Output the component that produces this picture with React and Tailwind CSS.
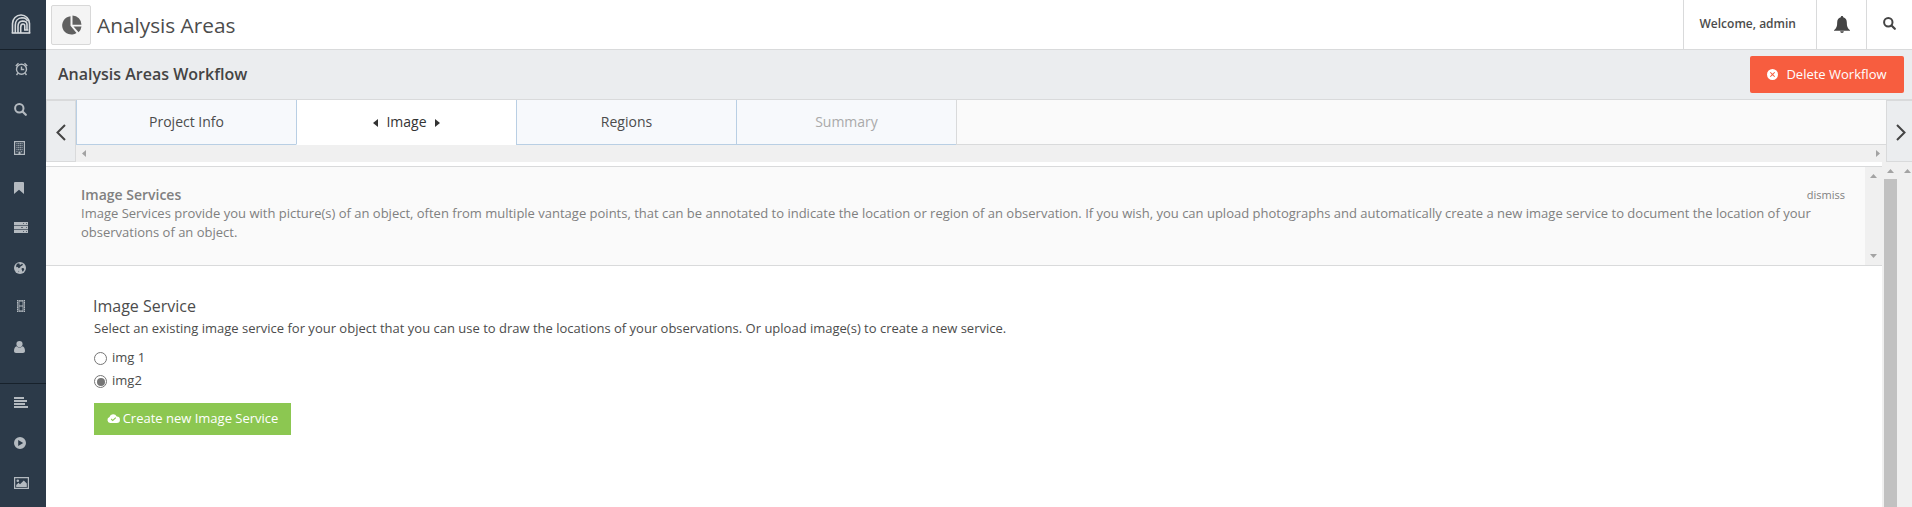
import React from "react";

function Svg({ w, h, vb, className = "", children }) {
  return (
    <svg width={w} height={h} viewBox={vb || `0 0 ${w} ${h}`} fill="currentColor" className={"shrink-0 " + className}>
      {children}
    </svg>
  );
}

const Logo = () => (
  <Svg w={20} h={20} className="text-[#d5d9dc]">
    <g fill="none" stroke="currentColor" strokeWidth="1.600">
      <path d="M1.500 19V9.500a8.500 8.500 0 0 1 17 0V19" />
      <path d="M4.300 19V11C4.300 7 7 4 11 3.800c3 0 5 1.500 5.500 3.500" />
      <path d="M7 19v-6.500c0-3.500 2-5.300 4.500-5.500 2.500 0 4.500 1 4.500 3.500V16" />
      <path d="M9.700 19v-5.500c0-2.500 1-3.500 2.300-3.500s1.800.7 1.800 2V16h3.500" />
      <path d="M.7 19h18.600" />
    </g>
  </Svg>
);

const Search = ({ size = 13, className }) => (
  <Svg w={size} h={size} vb="0 0 13 13" className={className}>
    <circle cx="5.300" cy="5.300" r="4.200" fill="none" stroke="currentColor" strokeWidth="2" />
    <path d="M8.500 8.500l3.300 3.300" stroke="currentColor" strokeWidth="2.200" strokeLinecap="round" />
  </Svg>
);

const Alarm = () => (
  <Svg w={13} h={14}>
    <g fill="none" stroke="currentColor" strokeWidth="1.400">
      <circle cx="6.500" cy="7.200" r="5" />
      <path d="M6.500 4.500v3h2.700" />
      <path d="M.8 3.900L3.500 1.200M12.200 3.900L9.500 1.200M2.800 11.300l-1.300 1.700M10.200 11.300l1.300 1.700" />
    </g>
  </Svg>
);

const Building = () => (
  <Svg w={11} h={14}>
    <path d="M.6.600h9.800v12.800H.6z" fill="none" stroke="currentColor" strokeWidth="1.200" />
    <path d="M2.300 2.700h6.400M2.300 4.700h6.400M2.300 6.700h6.400M2.300 8.700h6.400M2.300 10.700h1.700M7 10.700h1.700" stroke="currentColor" strokeWidth="1.100" strokeDasharray="1.300 .4" />
    <path d="M4.500 10.500h2v3h-2z" />
  </Svg>
);

const Bookmark = () => (
  <Svg w={10} h={12}>
    <path d="M1 0h8a1 1 0 0 1 1 1v11L5 7.700 0 12V1a1 1 0 0 1 1-1z" />
  </Svg>
);

const Server = () => (
  <Svg w={14} h={11}>
    <path d="M0 0h14v11H0z" opacity=".35" />
    <path fillRule="evenodd" d="M0 0h14v3H0zM9 1v1h1V1zM12 1v1h1V1zM0 4h14v3H0zM7 5v1h2V5zM12 5v1h1V5zM0 8h14v3H0zM9 9v1h1V9zM12 9v1h1V9z" />
  </Svg>
);

const Globe = () => (
  <Svg w={12} h={12}>
    <circle cx="6" cy="6" r="6" />
    <path fill="#2c3a49" d="M3 1.800l2.300-.6.200 1.200 1.400.3.900-1 1.200.4-.7 1.500-1.600.6-.6 1.400-1.500.7-.8-1.200-1.300.2L2 4zM8 6l1.800.2.500 1-1 2-1.100.3-.2-1.500-.6-1zM4.300 8.700l.9.500-.3 1z" />
  </Svg>
);

const Film = () => (
  <Svg w={8} h={12}>
    <g fill="none" stroke="currentColor" strokeWidth="1.200">
      <path d="M.6 0v12M7.400 0v12" strokeDasharray="1.600 .5" />
      <path d="M2 .8h4M2 6h4M2 11.200h4" />
      <path d="M2 0v12M6 0v12" strokeWidth=".8" />
    </g>
  </Svg>
);

const User = () => (
  <Svg w={11} h={12}>
    <circle cx="5.500" cy="3.100" r="3.100" />
    <path d="M2.700 5.300C1 5.700 0 7.300 0 10c0 1.300.8 2 2 2h7c1.200 0 2-.7 2-2 0-2.700-1-4.300-2.700-4.700-.8.900-1.700 1.300-2.800 1.300s-2-.4-2.800-1.300z" />
  </Svg>
);

const Lines = () => (
  <Svg w={14} h={11}>
    <path d="M0 0h10v2H0zM0 3h13v2H0zM0 6h11v2H0zM0 9h14v2H0z" />
  </Svg>
);

const Play = () => (
  <Svg w={12} h={12}>
    <path fillRule="evenodd" d="M6 0a6 6 0 1 1 0 12A6 6 0 0 1 6 0zM4.200 3v6L9.200 6z" />
  </Svg>
);

const Picture = () => (
  <Svg w={15} h={12}>
    <path d="M.6.600h13.800v10.800H.6z" fill="none" stroke="currentColor" strokeWidth="1.200" />
    <circle cx="3.800" cy="3.700" r="1.300" />
    <path d="M2.200 10V8l2.300-2.300L6 7.200l3.800-3.800 3 3V10z" />
  </Svg>
);

const NAV_TOP = [
  { Icon: Alarm, box: "h-[38px] pl-[15px]" },
  { Icon: Search, box: "h-[42px] pl-[14px]" },
  { Icon: Building, box: "h-[36px] pl-[14px]" },
  { Icon: Bookmark, box: "h-[44px] pl-[14px]" },
  { Icon: Server, box: "h-[35px] pl-[14px]" },
  { Icon: Globe, box: "h-[45px] pl-[14px]" },
  { Icon: Film, box: "h-[31px] pl-[17px]" },
  { Icon: User, box: "h-[51px] pl-[14px]" },
];

const NAV_BOTTOM = [
  { Icon: Lines, box: "h-[37px] pl-[14px]" },
  { Icon: Play, box: "h-[43px] pl-[14px]" },
  { Icon: Picture, box: "h-[38px] pl-[14px]" },
];

function NavItem({ Icon, box }) {
  return (
    <a className={"flex shrink-0 items-center " + box}>
      <Icon />
    </a>
  );
}

function Sidebar() {
  return (
    <nav className="flex w-[46px] shrink-0 flex-col bg-[#2c3a49] text-[#b4bac0]">
      <div className="flex h-[50px] shrink-0 justify-center border-b border-[#17212b] pt-[14px] pr-1">
        <Logo />
      </div>
      <div className="flex h-[334px] shrink-0 flex-col border-b border-[#17212b]">
        {NAV_TOP.map((n, i) => (
          <NavItem key={i} {...n} />
        ))}
      </div>
      <div className="flex flex-col">
        {NAV_BOTTOM.map((n, i) => (
          <NavItem key={i} {...n} />
        ))}
      </div>
    </nav>
  );
}

function Header() {
  return (
    <header className="flex h-[50px] shrink-0 border-b border-[#d9dadb] bg-white">
      <div className="mt-[5px] ml-[5px] flex h-10 w-10 items-center justify-center rounded-xs border border-[#d8d8d8] bg-[#f4f4f4] text-[#606060]">
        <Svg w={21} h={21}>
          <path d="M9.500 1.200v9.600l6 7.200A9.200 9.200 0 1 1 9.500 1.200z" />
          <path d="M11.500.5a9.300 9.300 0 0 1 9 9.200h-9zM12.500 11.500h8a9 9 0 0 1-2.900 5.700z" />
        </Svg>
      </div>
      <h1 className="ml-[6px] text-[20.8px] leading-[50px] text-[#4c4c4c]">Analysis Areas</h1>
      <div className="ml-auto flex">
        <div className="w-[133px] border-l border-[#d9dadb] pl-[15.5px] text-[12px] leading-[48px] font-semibold text-[#4c4c4c]">
          Welcome, admin
        </div>
        <div className="flex w-[50px] items-center justify-center border-l border-[#d9dadb] pb-px text-[#444]">
          <Svg w={16} h={17}>
            <path d="M8 0c.8 0 1.200.5 1.200 1.200 2.400.6 3.600 2.500 3.600 5 0 4 .7 6 3.200 8v.6H0v-.6c2.500-2 3.200-4 3.200-8 0-2.500 1.200-4.400 3.600-5C6.800.5 7.200 0 8 0zM6.200 15.300h3.600c0 1-.8 1.700-1.800 1.700s-1.800-.7-1.800-1.700z" />
          </Svg>
        </div>
        <div className="flex w-[46px] items-center border-l border-[#d9dadb] pb-[3px] pl-4 text-[#444]">
          <Search />
        </div>
      </div>
    </header>
  );
}

function Tab({ children, className = "" }) {
  return (
    <div className={"flex h-[45px] w-[220px] shrink-0 items-center justify-center border-b border-l border-[#b9cfe4] pb-[2px] text-[14px] " + className}>
      {children}
    </div>
  );
}

const Tri = ({ dir, className = "" }) => (
  <Svg w={5} h={8} className={className}>
    <path d={dir === "left" ? "M5 0v8L0 4z" : "M0 0v8l5-4z"} />
  </Svg>
);

const Arrow = ({ dir }) => (
  <Svg w={7} h={4} className="text-[#a3a3a3]">
    <path d={dir === "up" ? "M0 4h7L3.500 0z" : "M0 0h7L3.500 4z"} />
  </Svg>
);

function Tabs() {
  return (
    <div className="flex h-[62px] shrink-0">
      <div className="flex w-[30px] items-center border border-[#d9dadb] bg-[#ebedef] pt-[3px] pl-[9px] text-[#444]">
        <Svg w={10} h={17}>
          <path d="M9 1L1.500 8.500 9 16" fill="none" stroke="currentColor" strokeWidth="2" />
        </Svg>
      </div>
      <div className="flex flex-1 flex-col">
        <div className="flex h-[45px] bg-[#fafafa]">
          <Tab className="bg-[#f7f9fc] text-[#4c4c4c]">Project Info</Tab>
          <Tab className="gap-2 border-b-white bg-white font-medium text-[#333]">
            <Tri dir="left" className="mt-[4px]" />
            Image
            <Tri dir="right" className="mt-[4px]" />
          </Tab>
          <Tab className="bg-[#f7f9fc] text-[#4c4c4c]">Regions</Tab>
          <Tab className="bg-[#f7f9fc] text-[#aaa]">Summary</Tab>
          <div className="flex-1 border-b border-l border-[#d9dadb]" />
        </div>
        <div className="flex h-[17px] items-center justify-between bg-[#f0f0f0] px-[6px] text-[#a3a3a3]">
          <Svg w={4} h={7}>
            <path d="M4 0v7L0 3.500z" />
          </Svg>
          <Svg w={4} h={7}>
            <path d="M0 0v7l4-3.500z" />
          </Svg>
        </div>
      </div>
      <div className="flex w-[26px] items-center border-y border-l border-[#d9dadb] bg-[#ebedef] pt-[3px] pl-[9px] text-[#444]">
        <Svg w={10} h={17}>
          <path d="M1 1l7.500 7.500L1 16" fill="none" stroke="currentColor" strokeWidth="2" />
        </Svg>
      </div>
    </div>
  );
}

function Notice() {
  return (
    <section className="mt-1 flex h-[100px] shrink-0 border-y border-[#d9dadb] bg-[#fafafa] text-[#808080]">
      <div className="flex-1 pt-[18px] pl-[35px]">
        <div className="flex h-[18.5px] justify-between pr-5">
          <h2 className="text-[14px] leading-[19px] font-semibold">Image Services</h2>
          <a className="text-[11px] leading-[20px]">dismiss</a>
        </div>
        <p className="w-[1740px] text-[13px] leading-[19px]">
          Image Services provide you with picture(s) of an object, often from multiple vantage points, that can be annotated to indicate the location or region of an observation. If you wish, you can upload photographs and automatically create a new image service to document the location of your
          <br />
          observations of an object.
        </p>
      </div>
      <div className="flex w-[17px] flex-col items-center justify-between bg-[#f0f0f0] py-[7px]">
        <Arrow dir="up" />
        <Arrow dir="down" />
      </div>
    </section>
  );
}

function Radio({ label, checked }) {
  return (
    <label className="flex h-[23px] items-center gap-[5px] text-[13px]">
      <span className="mt-[2px] flex h-[13px] w-[13px] items-center justify-center rounded-full border border-[#767676] bg-white">
        {checked && <span className="h-[8px] w-[8px] rounded-full bg-[#767676]" />}
      </span>
      {label}
    </label>
  );
}

function Content() {
  return (
    <main className="flex flex-col items-start pt-[28px] pl-[48px] text-[#4c4c4c]">
      <h3 className="-ml-px text-[16px] leading-6">Image Service</h3>
      <p className="mt-px text-[13px] leading-[19px]">
        Select an existing image service for your object that you can use to draw the locations of your observations. Or upload image(s) to create a new service.
      </p>
      <div className="mt-[8px] flex flex-col">
        <Radio label="img 1" />
        <Radio label="img2" checked />
      </div>
      <button className="mt-[11px] flex h-8 w-[197px] items-center justify-center gap-[3px] bg-[#8cc751] text-[13px] font-medium whitespace-nowrap text-white">
        <Svg w={13} h={9} className="-mt-px">
          <path fillRule="evenodd" d="M3.200 9A3.100 3.100 0 0 1 2.500 3 3.800 3.800 0 0 1 9.700 2.600 3.200 3.200 0 0 1 9.800 9zM5.700 7.300L9.200 4l-.8-.8-2.700 2.500-1.100-1.100-.8.800z" />
        </Svg>
        Create new Image Service
      </button>
    </main>
  );
}

export default function App() {
  return (
    <div className="flex h-[507px] w-[1912px] overflow-hidden bg-white font-['Open_Sans','Noto_Sans',sans-serif]">
      <Sidebar />
      <div className="flex min-w-0 flex-1 flex-col">
        <Header />
        <div className="flex h-[50px] shrink-0 items-center justify-between border-b border-[#d9dadb] bg-[#ebedef] pr-2 pl-3">
          <h2 className="pb-[2px] text-[16px] font-semibold text-[#444]">Analysis Areas Workflow</h2>
          <button className="flex h-[37px] w-[154px] items-center justify-center gap-2 rounded-xs bg-[#f75d3f] text-[13px] font-medium text-white">
            <Svg w={11} h={11} className="-mt-px">
              <path fillRule="evenodd" d="M5.500 0a5.500 5.500 0 1 1 0 11 5.500 5.500 0 0 1 0-11zM3.600 2.900l-.7.700 1.900 1.900-1.900 1.900.7.700 1.900-1.900 1.900 1.900.7-.7-1.900-1.900 1.900-1.900-.7-.7-1.900 1.900z" />
            </Svg>
            Delete Workflow
          </button>
        </div>
        <Tabs />
        <div className="flex min-h-0 flex-1">
          <div className="flex w-[1836px] flex-col">
            <Notice />
            <Content />
          </div>
          <div className="flex flex-1 bg-[#f0f0f0] pl-[2px]">
            <div className="flex w-[13px] flex-col items-center pt-[7px]">
              <Arrow dir="up" />
              <div className="mt-[6px] w-[13px] flex-1 bg-[#c1c1c1]" />
            </div>
            <div className="pt-[7px] pl-[7px]">
              <Arrow dir="up" />
            </div>
          </div>
        </div>
      </div>
    </div>
  );
}
